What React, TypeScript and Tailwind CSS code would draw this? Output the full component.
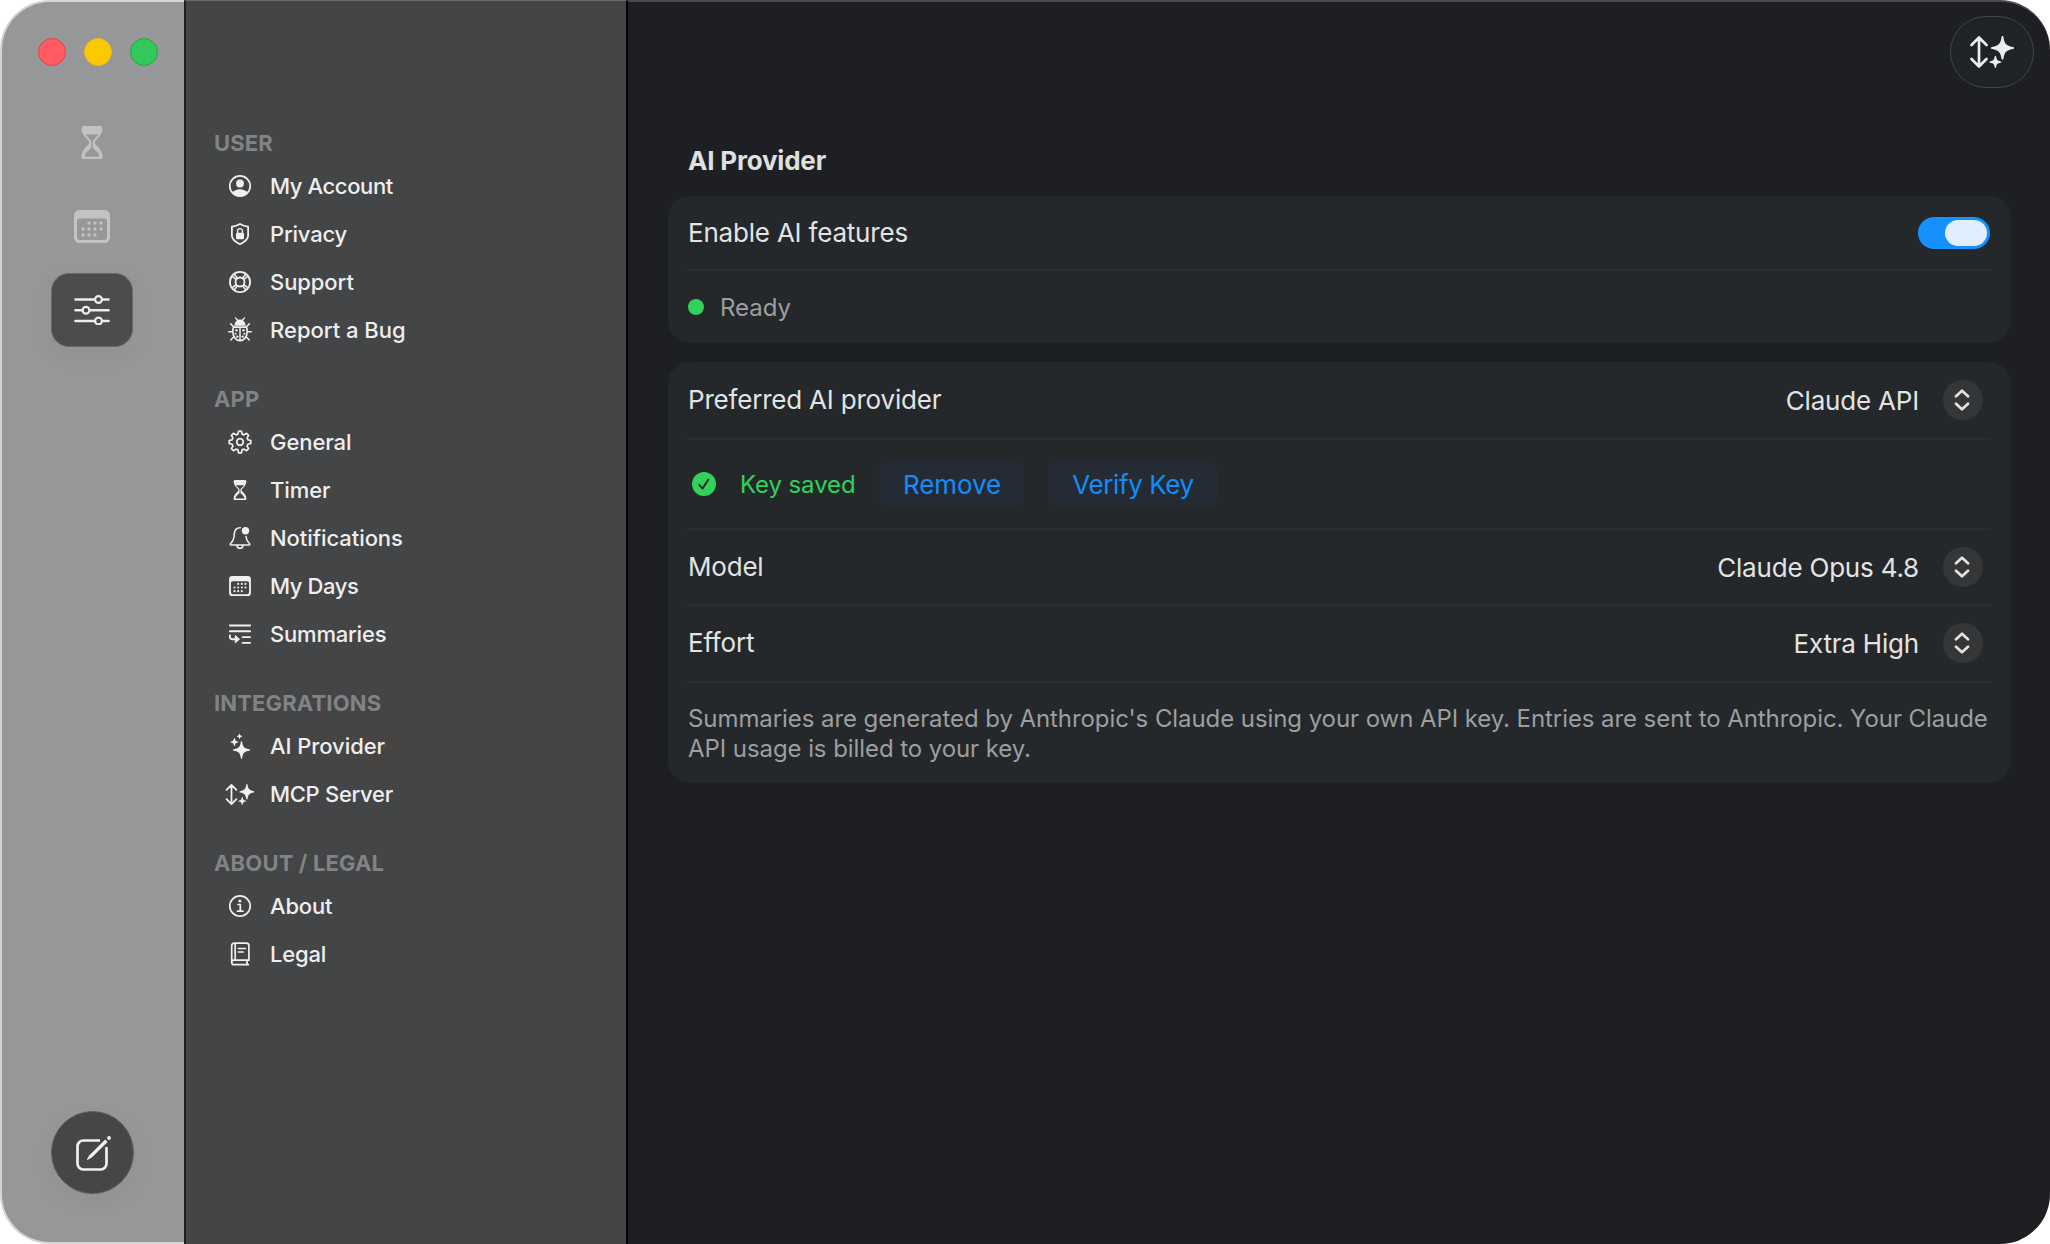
import type { ReactNode } from 'react'

/**
 * Settings window: icon rail, sidebar navigation and the AI Provider pane
 */

const DOTS = [
  [15, 13], [21, 13], [27, 13],
  [9, 19], [15, 19], [21, 19], [27, 19],
  [9, 25], [15, 25], [21, 25],
]

function HourglassIcon({ className }: { className: string }) {
  return (
    <svg viewBox="0 0 22 33" className={className} fill="currentColor">
      <path
        fillRule="evenodd"
        d="M3 0h16c1.700 0 2.600 1 2.500 2.600C21.200 7.500 18.500 11 15 14c-1.500 1.300-1.500 3.700 0 5 3.500 3 6.200 6.500 6.500 11.400.1 1.600-.8 2.600-2.500 2.600H3c-1.700 0-2.600-1-2.500-2.600C.8 25.500 3.500 22 7 19c1.500-1.300 1.500-3.700 0-5C3.500 11 .8 7.500.5 2.600.4 1 1.300 0 3 0zM4.500 8.500C5.600 10.200 7 11.500 8.600 13c1.300 1.200 1.700 2.300 1.700 3.500v4.300c0 .9-.3 1.300-1 1.900C6.600 25 4.300 27 3.700 29.500c-.2.800.1 1.200.9 1.200h12.800c.8 0 1.100-.4.900-1.200-.6-2.500-2.900-4.500-5.600-6.800-.7-.6-1-1-1-1.900v-4.300c0-1.200.4-2.300 1.700-3.500 1.600-1.500 3-2.800 4.100-4.500z"
      />
    </svg>
  )
}

function CalendarIcon({ className }: { className: string }) {
  return (
    <svg viewBox="0 0 36 33" className={className} fill="currentColor">
      <path
        fillRule="evenodd"
        d="M5.500 0h25A5.500 5.500 0 0 1 36 5.500v22a5.500 5.500 0 0 1-5.500 5.500h-25A5.500 5.500 0 0 1 0 27.500v-22A5.500 5.500 0 0 1 5.500 0zM5.800 8.500A2.800 2.800 0 0 0 3 11.300V27a3 3 0 0 0 3 3h24a3 3 0 0 0 3-3V11.300a2.800 2.800 0 0 0-2.800-2.800z"
      />
      {DOTS.map(([x, y]) => (
        <circle key={`${x}-${y}`} cx={x} cy={y} r="1.700" />
      ))}
    </svg>
  )
}

function SlidersIcon() {
  return (
    <svg viewBox="0 0 36 30" className="h-[30px] w-9" fill="none" stroke="currentColor" strokeWidth="2.600" strokeLinecap="round">
      <path d="M1.500 4.500h19M28.500 4.500h6M1.500 15.200h6.500M16 15.200h18.500M1.500 26h19M28.500 26h6" />
      <circle cx="24.500" cy="4.500" r="3.400" strokeWidth="2.200" />
      <circle cx="12" cy="15.200" r="3.400" strokeWidth="2.200" />
      <circle cx="24.500" cy="26" r="3.400" strokeWidth="2.200" />
    </svg>
  )
}

function ComposeIcon() {
  return (
    <svg viewBox="0 0 36 36" className="h-9 w-9" fill="none" stroke="currentColor" strokeLinecap="round">
      <path d="M25 5.500H8.300a5.800 5.800 0 0 0-5.800 5.800v17.400a5.800 5.800 0 0 0 5.800 5.800h17.400a5.800 5.800 0 0 0 5.800-5.800V12" strokeWidth="2.700" strokeLinecap="butt" />
      <path d="M30.200 4.500l2.400 2.400L16.800 22.600l-3.900 2.200c-.6.300-1.100-.2-.8-.8l2.300-3.800z" fill="currentColor" stroke="none" />
      <circle cx="34" cy="3" r="1.900" fill="currentColor" stroke="none" />
    </svg>
  )
}

function McpIcon({ className }: { className: string }) {
  return (
    <svg viewBox="0 0 44 32" className={className} fill="currentColor">
      <path d="M9 2v28M1.500 9L9 1.500 16.500 9M1.500 23L9 30.500l7.500-7.500" fill="none" stroke="currentColor" strokeWidth="2.700" strokeLinecap="round" strokeLinejoin="round" />
      <path d="M32.500 0c.7 0 .9.600 1 1.200.9 6.300 2.600 8.500 9.300 9.700.7.100 1.200.4 1.200 1s-.5.900-1.200 1c-6.700 1.200-8.400 3.400-9.300 9.700-.1.600-.3 1.200-1 1.200s-.9-.6-1-1.200c-.9-6.300-2.600-8.500-9.300-9.700-.7-.1-1.200-.4-1.200-1s.5-.9 1.200-1c6.700-1.200 8.400-3.400 9.300-9.700.1-.6.300-1.200 1-1.200z" />
      <path d="M25.400 19.800c.5 0 .6.400.7.800.5 3.400 1.400 4.200 4.600 4.800.5.100.8.300.8.700s-.3.600-.8.700c-3.200.6-4.100 1.400-4.600 4.500-.1.400-.2.700-.7.700s-.6-.3-.7-.7c-.5-3.100-1.400-3.900-4.600-4.500-.5-.1-.8-.3-.8-.7s.3-.6.800-.7c3.200-.6 4.100-1.400 4.600-4.800.1-.4.200-.8.700-.8z" />
    </svg>
  )
}

function AccountIcon() {
  return (
    <svg viewBox="0 0 24 24" className="h-6 w-6" fill="currentColor">
      <circle cx="12" cy="12" r="10.200" fill="none" stroke="currentColor" strokeWidth="1.700" />
      <circle cx="12" cy="9.500" r="3.900" />
      <path d="M4.300 18.700c1.700-2.200 4.500-3.400 7.700-3.400s6 1.200 7.700 3.400A10.500 10.500 0 0 1 12 22.500a10.500 10.500 0 0 1-7.700-3.800z" />
    </svg>
  )
}

function PrivacyIcon() {
  return (
    <svg viewBox="0 0 24 24" className="h-6 w-6" fill="none" stroke="currentColor" strokeLinejoin="round">
      <path d="M12 1.900c2.500 1.500 5.300 2.400 8.100 2.700v9.200c0 3.900-4.400 6.600-8.100 8.400-3.700-1.800-8.100-4.500-8.100-8.400V4.600C6.700 4.300 9.500 3.400 12 1.900z" strokeWidth="1.800" />
      <rect x="8" y="10.800" width="8" height="6.400" rx="1" fill="currentColor" stroke="none" />
      <path d="M9.600 11V9a2.400 2.400 0 0 1 4.800 0v2" strokeWidth="1.300" />
    </svg>
  )
}

function SupportIcon() {
  return (
    <svg viewBox="0 0 24 24" className="h-6 w-6" fill="none" stroke="currentColor" strokeWidth="1.800">
      <circle cx="12" cy="12" r="10.100" />
      <circle cx="12" cy="12" r="4.500" />
      <path d="M4.300 6.300l3.800 3M6.300 4.300l3 3.800M19.700 6.300l-3.800 3M17.700 4.300l-3 3.800M4.300 17.700l3.800-3M6.300 19.700l3-3.800M19.700 17.700l-3.800-3M17.700 19.700l-3-3.800" strokeWidth="1.600" />
    </svg>
  )
}

function BugIcon() {
  return (
    <svg viewBox="0 0 24 26" className="h-[26px] w-6" fill="none" stroke="currentColor" strokeLinecap="round">
      <path d="M7.600.9l2 2.500M16.400.9l-2 2.500" strokeWidth="1.400" />
      <path d="M6.300 8.800C6.800 5 8.900 2.600 12 2.600S17.200 5 17.700 8.800z" fill="currentColor" stroke="none" />
      <path d="M5.600 10.100h12.800c.5 1.300.8 2.800.8 4.400 0 5-3.100 9.200-7.200 9.200s-7.200-4.200-7.200-9.200c0-1.600.3-3.100.8-4.400z" strokeWidth="1.700" />
      <path d="M12 10.500v13M5 9.300L2.600 6.700M19 9.300l2.400-2.600M4.300 14.800H.8M19.700 14.800h3.500M5.600 20l-2.900 3M18.400 20l2.900 3" strokeWidth="1.500" />
      <g fill="currentColor" stroke="none">
        <circle cx="8.500" cy="13.300" r="1.200" />
        <circle cx="15.500" cy="13.300" r="1.200" />
        <circle cx="7.600" cy="16.700" r="1" />
        <circle cx="16.400" cy="16.700" r="1" />
        <circle cx="9.300" cy="19.600" r="1.200" />
        <circle cx="14.700" cy="19.600" r="1.200" />
      </g>
    </svg>
  )
}

function GearIcon() {
  return (
    <svg viewBox="0 0 24 24" className="h-6 w-6" fill="none" stroke="currentColor" strokeWidth="1.700" strokeLinejoin="round">
      <path d="M10.600 1.200h2.800l.7 2.900 1.900.8 2.600-1.600 2 2-1.500 2.600.8 1.900 2.900.8v2.800l-2.900.8-.8 1.900 1.500 2.600-2 2-2.600-1.600-1.900.8-.7 2.900h-2.800l-.7-2.900-1.900-.8-2.600 1.600-2-2 1.500-2.600-.8-1.900-2.900-.8v-2.800l2.900-.8.8-1.900-1.500-2.600 2-2L8 4.900l1.900-.8z" />
      <circle cx="12" cy="12" r="3.300" />
    </svg>
  )
}

function BellIcon() {
  return (
    <svg viewBox="0 0 24 24" className="h-6 w-6" fill="none" stroke="currentColor" strokeWidth="1.600" strokeLinecap="round" strokeLinejoin="round">
      <path d="M12.300 1.700C8.700 1.600 6.500 4.300 6.300 8c-.2 4.500-.8 6.300-2.700 8.200-.9.900-1.400 1.400-1.400 2 0 .5.400.8 1 .8h17.600c.6 0 1-.3 1-.8 0-.6-.5-1.100-1.400-2-1.500-1.500-2.100-3-2.400-5.700" />
      <path d="M8.900 19.400c.2 1.800 1.500 2.900 3.100 2.900s2.900-1.100 3.100-2.900" />
      <circle cx="17.500" cy="4.700" r="3.700" fill="currentColor" stroke="none" />
    </svg>
  )
}

function SummariesIcon() {
  return (
    <svg viewBox="0 0 24 24" className="h-6 w-6" fill="none" stroke="currentColor" strokeWidth="1.900" strokeLinecap="round">
      <path d="M1.900 3.500h20.200M1.900 9.300h20.200M14.500 15.100h7.600M14.500 20.900h7.600" />
      <path d="M1.900 13.500v1.200c0 1.700.9 2.500 2.600 2.500h4" />
      <path d="M7.600 13.800l3.900 3.400-3.900 3.400z" fill="currentColor" strokeWidth="1" strokeLinejoin="round" />
    </svg>
  )
}

function SparklesIcon() {
  return (
    <svg viewBox="0 0 24 26" className="h-[26px] w-6" fill="currentColor">
      <path d="M13.500 8.200c.5 0 .6.400.7.900.7 4.900 1.800 6.300 7 7.200.5.100.9.300.9.700s-.4.700-.9.800c-5.200.9-6.300 2.300-7 7.200-.1.500-.2.800-.7.800s-.6-.3-.7-.8c-.7-4.900-1.800-6.300-7-7.200-.5-.1-.9-.3-.9-.8s.4-.6.900-.7c5.200-.9 6.300-2.300 7-7.200.1-.5.200-.9.700-.9z" />
      <path d="M6.400 5.100c.3 0 .4.200.5.500.4 2.200.9 2.600 3 3 .3.100.5.200.5.500s-.2.400-.5.500c-2.100.4-2.600.8-3 3-.1.300-.2.500-.5.500s-.4-.2-.5-.5c-.4-2.200-.9-2.600-3-3-.3-.1-.5-.2-.5-.5s.2-.4.500-.5c2.100-.4 2.600-.8 3-3 .1-.3.200-.5.500-.5z" />
      <path d="M11.500.700c.2 0 .3.100.4.400.2 1.300.5 1.600 1.800 1.800.3.100.5.200.5.400s-.2.300-.5.400c-1.300.2-1.600.5-1.800 1.800-.1.300-.2.400-.4.400s-.3-.1-.4-.4c-.2-1.300-.5-1.600-1.800-1.800-.3-.1-.5-.2-.5-.4s.2-.3.500-.4c1.300-.2 1.600-.5 1.800-1.800.1-.3.200-.4.400-.4z" />
    </svg>
  )
}

function InfoIcon() {
  return (
    <svg viewBox="0 0 24 24" className="h-6 w-6" fill="none" stroke="currentColor" strokeWidth="1.700" strokeLinecap="round" strokeLinejoin="round">
      <circle cx="12" cy="12" r="10.200" />
      <path d="M10 10.500h2.300v6.600M9.500 17.200h5.400" />
      <circle cx="11.900" cy="6.900" r="1.500" fill="currentColor" stroke="none" />
    </svg>
  )
}

function BookIcon() {
  return (
    <svg viewBox="0 0 24 24" className="h-6 w-6" fill="none" stroke="currentColor" strokeWidth="1.700" strokeLinecap="round" strokeLinejoin="round">
      <path d="M20.900 18.200H6a2.200 2.200 0 0 0 0 4.500h14.300M19.300 18.500c-.5 1.400-.5 2.600 0 4M3.700 20.400V3.700c0-1.600.9-2.500 2.500-2.500h12.200c1.700 0 2.500.8 2.500 2.500v14.500M7.200 1.500v16.500" />
      <path d="M10.300 6.500h7.200M10.300 9.900h5" strokeWidth="1.500" />
    </svg>
  )
}

interface NavItem {
  label: string
  icon: ReactNode
  tracking?: string
  active?: boolean
}

interface NavSection {
  title: string
  items: NavItem[]
}

const SECTIONS: NavSection[] = [
  {
    title: 'USER',
    items: [
      { label: 'My Account', icon: <AccountIcon />, tracking: 'tracking-[-0.4px]' },
      { label: 'Privacy', icon: <PrivacyIcon />, tracking: 'tracking-[-0.2px]' },
      { label: 'Support', icon: <SupportIcon /> },
      { label: 'Report a Bug', icon: <BugIcon />, tracking: 'tracking-normal' },
    ],
  },
  {
    title: 'APP',
    items: [
      { label: 'General', icon: <GearIcon /> },
      { label: 'Timer', icon: <HourglassIcon className="h-5 w-3.5" /> },
      { label: 'Notifications', icon: <BellIcon /> },
      { label: 'My Days', icon: <CalendarIcon className="h-5 w-[22px]" />, tracking: 'tracking-[-0.4px]' },
      { label: 'Summaries', icon: <SummariesIcon />, tracking: 'tracking-[-0.2px]' },
    ],
  },
  {
    title: 'INTEGRATIONS',
    items: [
      { label: 'AI Provider', icon: <SparklesIcon />, active: true },
      { label: 'MCP Server', icon: <McpIcon className="h-[21px] w-[30px] shrink-0" />, tracking: 'tracking-[-0.3px]' },
    ],
  },
  {
    title: 'ABOUT / LEGAL',
    items: [
      { label: 'About', icon: <InfoIcon />, tracking: 'tracking-[-0.2px]' },
      { label: 'Legal', icon: <BookIcon />, tracking: 'tracking-[-0.2px]' },
    ],
  },
]

function Rail() {
  return (
    <aside className="flex w-[184px] shrink-0 flex-col items-center rounded-l-[50px] border-t-2 border-b-2 border-l-2 border-[#d4d5d6] bg-[#969798] pr-0.5">
      <div className="mt-9 flex gap-[18px] pl-3">
        <span className="h-7 w-7 rounded-full border border-[#e2424b] bg-[#ff5b60]" />
        <span className="h-7 w-7 rounded-full border border-[#eebd0c] bg-[#fbc902]" />
        <span className="h-7 w-7 rounded-full border border-[#1fa843] bg-[#34c759]" />
      </div>
      <HourglassIcon className="mt-[60px] h-[33px] w-[22px] text-[#c1c2c4]" />
      <CalendarIcon className="mt-[51px] h-[33px] w-9 text-[#c1c2c4]" />
      <div className="mt-[30px] flex h-[74px] w-[82px] items-center justify-center rounded-[18px] border border-[#69696b] bg-[#4c4c4e] text-[#ececec] shadow-[0_8px_24px_rgba(0,0,0,0.04)]">
        <SlidersIcon />
      </div>
      <button className="mt-auto mb-12 flex h-[83px] w-[83px] items-center justify-center rounded-full border border-[#5f5f60] bg-[#464646] pl-0.5 text-[#f0f0f0] shadow-[0_8px_24px_rgba(0,0,0,0.04)]">
        <ComposeIcon />
      </button>
    </aside>
  )
}

function Sidebar() {
  return (
    <nav className="w-[444px] shrink-0 border-t border-r-2 border-l-2 border-t-[#6a6b6c] border-r-black border-l-[#1f2021] bg-[#444546] pt-[123px]">
      {SECTIONS.map((section) => (
        <section key={section.title} className="mb-[26px]">
          <h2 className="flex h-[38px] items-center pl-7 text-[22px] font-bold tracking-[0.15px] text-[#828384]">
            {section.title}
          </h2>
          {section.items.map((item) => (
            <a
              key={item.label}
              className={`mr-[18px] ml-[22px] flex h-12 items-center rounded-lg pl-4 ${item.active ? 'bg-[#464543]' : ''}`}
            >
              <span className="flex w-8 shrink-0 justify-center text-[#f0f0f0]">{item.icon}</span>
              <span className={`ml-3.5 text-[22px] font-medium text-[#eeeeee] ${item.tracking ?? 'tracking-[-0.07px]'}`}>
                {item.label}
              </span>
            </a>
          ))}
        </section>
      ))}
    </nav>
  )
}

function Stepper() {
  return (
    <span className="flex h-10 w-10 items-center justify-center rounded-full bg-[#353638]">
      <svg viewBox="0 0 16 22" className="mr-0.5 h-[22px] w-4" fill="none" stroke="#e2e2e3" strokeWidth="2.700" strokeLinecap="round" strokeLinejoin="round">
        <path d="M2 7.300L8 1.700l6 5.600M2 14.700l6 5.600 6-5.600" />
      </svg>
    </span>
  )
}

interface SelectRowProps {
  label: string
  value: string
  className: string
}

function SelectRow({ label, value, className }: SelectRowProps) {
  return (
    <div className={`flex items-center justify-between border-b-2 border-[#2b2f31] pr-2 pl-px ${className}`}>
      <span className="tracking-[-0.2px]">{label}</span>
      <div className="flex items-center gap-6">
        <span className="pt-0.5 tracking-[-0.2px]">{value}</span>
        <Stepper />
      </div>
    </div>
  )
}

function Card({ children, className }: { children: ReactNode; className: string }) {
  return (
    <div className={`rounded-[22px] bg-[#24282a] pr-5 pl-[19px] text-[26px] text-[#e2e3e3] ${className}`}>
      {children}
    </div>
  )
}

export default function App() {
  return (
    <div className="flex h-[1244px] w-[2050px] overflow-hidden bg-white font-['Inter',sans-serif] leading-none">
      <Rail />
      <Sidebar />
      <main className="min-w-0 flex-1 rounded-r-[50px] border-t-2 border-[#47494b] bg-[#1e1f22]">
        <div className="flex h-[100px] justify-end pt-3.5 pr-4">
          <button className="flex h-[72px] w-[84px] items-center justify-center rounded-full border border-[#414447] bg-[#1f2325] text-[#ececec]">
            <McpIcon className="h-8 w-11" />
          </button>
        </div>

        <div className="pr-[39px] pl-10">
          <h1 className="flex h-[94px] items-end pb-[22px] pl-5 text-[26px] font-bold tracking-[-0.2px] text-[#dfe0e0]">
            AI Provider
          </h1>

          <Card className="h-[147px]">
            <div className="flex h-[75px] items-center justify-between border-b-2 border-[#2b2f31] pl-px">
              <span className="tracking-[-0.2px]">Enable AI features</span>
              <span className="mr-px flex h-8 w-[72px] items-center justify-end rounded-full bg-[#1490ff] pr-[3px]">
                <span className="h-[26px] w-[42px] rounded-full bg-[#e1eefd]" />
              </span>
            </div>
            <div className="flex h-[72px] items-center gap-4 pl-px text-2xl text-[#9c9ea0]">
              <span className="h-4 w-4 rounded-full bg-[#32d15b]" />
              <span className="pt-0.5">Ready</span>
            </div>
          </Card>

          <Card className="mt-[19px] h-[421px]">
            <SelectRow label="Preferred AI provider" value="Claude API" className="h-[78px]" />
            <div className="flex h-[90px] items-center border-b-2 border-[#2b2f31] pl-[5px]">
              <svg viewBox="0 0 24 24" className="h-6 w-6">
                <circle cx="12" cy="12" r="12" fill="#32d15b" />
                <path d="M7.300 12.800l3.300 3.800 5.800-9" fill="none" stroke="#24282a" strokeWidth="1.900" strokeLinecap="round" strokeLinejoin="round" />
              </svg>
              <span className="ml-6 w-[139px] pt-0.5 text-2xl tracking-[-0.1px] text-[#32d15b]">Key saved</span>
              <button className="h-12 w-[145px] rounded-xl bg-[#242b34] pt-0.5 pl-px tracking-[-0.1px] text-[#128dfb]">Remove</button>
              <button className="ml-6 h-12 w-[170px] rounded-xl bg-[#242b34] pt-0.5 tracking-[-0.4px] text-[#128dfb]">Verify Key</button>
            </div>
            <SelectRow label="Model" value="Claude Opus 4.8" className="h-[76px] pb-px" />
            <SelectRow label="Effort" value="Extra High" className="h-[77px] pb-px" />
            <p className="pt-[21px] pl-px text-2xl leading-[30px] tracking-[-0.075px] whitespace-nowrap text-[#9c9ea0]">
              Summaries are generated by Anthropic's Claude using your own API key. Entries are sent to Anthropic. Your Claude
              <br />
              API usage is billed to your key.
            </p>
          </Card>
        </div>
      </main>
    </div>
  )
}
